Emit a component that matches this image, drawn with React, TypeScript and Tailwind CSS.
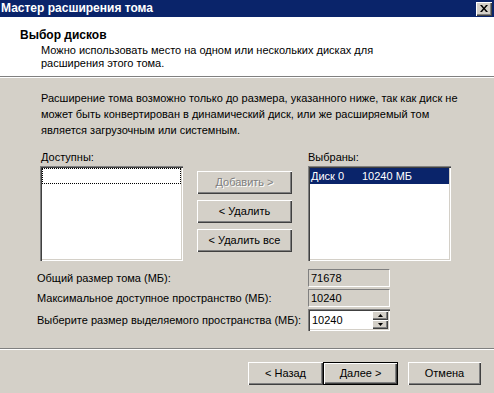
import React from 'react';

const sunken =
  'shadow-[inset_1px_1px_0_#808080,inset_2px_2px_0_#404040,inset_-1px_-1px_0_#ffffff,inset_-2px_-2px_0_#d4d0c8]';
const raised =
  'shadow-[inset_1px_1px_0_#ffffff,inset_-1px_-1px_0_#404040,inset_-2px_-2px_0_#808080]';

const Btn: React.FC<{ label: string; disabled?: boolean; isDefault?: boolean; className?: string }> = ({
  label,
  disabled,
  isDefault,
  className = '',
}) => (
  <div
    className={`${className} h-[23px] flex items-center justify-center bg-[#d4d0c8] ${
      isDefault ? 'border border-black' : ''
    }`}
  >
    <div className={`w-full h-full flex items-center justify-center ${raised}`}>
      <span
        className={
          disabled ? 'text-[#808080] [text-shadow:1px_1px_0_#ffffff]' : 'text-black'
        }
      >
        {label}
      </span>
    </div>
  </div>
);

const ReadOnly: React.FC<{ value: string }> = ({ value }) => (
  <div className="w-[82px] h-[18px] border border-t-[#808080] border-l-[#808080] border-b-white border-r-white bg-[#d4d0c8] px-[2px] flex items-center">
    {value}
  </div>
);

export default function App() {
  return (
    <div
      className="w-[494px] h-[393px] overflow-hidden bg-[#d4d0c8] flex flex-col text-[11px] leading-[13px] text-black"
      style={{ fontFamily: '"Liberation Sans", Arial, sans-serif' }}
    >
      {/* title bar */}
      <div className="h-[17px] bg-[#0a246a] flex items-center justify-between pl-[1px] pr-[2px]">
        <span className="text-white font-bold text-[12px]">Мастер расширения тома</span>
        <div className={`w-[16px] h-[14px] bg-[#d4d0c8] flex items-center justify-center ${raised}`}>
          <svg width="8" height="7" viewBox="0 0 8 7">
            <path d="M0 0h2l2 2.5L6 0h2L5 3.5 8 7H6L4 4.5 2 7H0l3-3.5z" fill="#000" />
          </svg>
        </div>
      </div>

      {/* header */}
      <div className="h-[60px] bg-white border-b border-[#808080] pl-[20px] pt-[11px]">
        <div className="font-bold text-[12px] leading-[14px]">Выбор дисков</div>
        <div className="pl-[21px] pt-[2px]">
          Можно использовать место на одном или нескольких дисках для
          <br />
          расширения этого тома.
        </div>
      </div>

      {/* body */}
      <div className="flex-1 border-t border-white pl-[40px] pt-[12px] flex flex-col">
        <p className="pl-[1px] w-[428px] leading-[16px]">
          Расширение тома возможно только до размера, указанного ниже, так как диск не может быть
          конвертирован в динамический диск, или же расширяемый том является загрузочным или
          системным.
        </p>

        <div className="flex mt-[13px]">
          <div className="flex flex-col">
            <div className="pl-[1px] h-[15px]">Доступны:</div>
            <div className={`w-[143px] h-[95px] bg-white p-[2px] ${sunken}`}>
              <div className="h-[16px] border border-dotted border-black" />
            </div>
          </div>

          <div className="flex flex-col gap-[6px] ml-[14px] mt-[20px]">
            <Btn label="Добавить >" disabled className="w-[95px]" />
            <Btn label="< Удалить" className="w-[95px]" />
            <Btn label="< Удалить все" className="w-[95px]" />
          </div>

          <div className="flex flex-col ml-[16px]">
            <div className="h-[15px]">Выбраны:</div>
            <div className={`w-[143px] h-[95px] bg-white p-[2px] ${sunken}`}>
              <div className="h-[16px] bg-[#0a246a] text-white flex items-center pl-[1px]">
                <span className="w-[51px]">Диск 0</span>
                <span>10240 МБ</span>
              </div>
            </div>
          </div>
        </div>

        <div className="flex flex-col gap-[2px] mt-[8px] -ml-[3px]">
          <div className="flex items-center h-[18px]">
            <span className="w-[271px]">Общий размер тома (МБ):</span>
            <ReadOnly value="71678" />
          </div>
          <div className="flex items-center h-[18px]">
            <span className="w-[271px]">Максимальное доступное пространство (МБ):</span>
            <ReadOnly value="10240" />
          </div>
          <div className="flex items-center h-[22px]">
            <span className="w-[271px]">Выберите размер выделяемого пространства (МБ):</span>
            <div className={`w-[82px] h-[22px] bg-white flex items-center pl-[4px] ${sunken}`}>
              <span className="flex-1">10240</span>
              <div className="flex flex-col w-[16px] h-[18px] mr-[2px]">
                <div className={`flex-1 bg-[#d4d0c8] flex items-center justify-center ${raised}`}>
                  <svg width="5" height="3" viewBox="0 0 5 3">
                    <path d="M2.5 0L5 3H0z" fill="#000" />
                  </svg>
                </div>
                <div className={`flex-1 bg-[#d4d0c8] flex items-center justify-center ${raised}`}>
                  <svg width="5" height="3" viewBox="0 0 5 3">
                    <path d="M0 0h5L2.5 3z" fill="#000" />
                  </svg>
                </div>
              </div>
            </div>
          </div>
        </div>
      </div>

      {/* footer */}
      <div className="h-[45px] border-t border-[#808080]">
        <div className="border-t border-white h-full flex items-start pt-[12px] pl-[248px]">
          <Btn label="< Назад" className="w-[75px]" />
          <Btn label="Далее >" isDefault className="w-[75px]" />
          <Btn label="Отмена" className="w-[73px] ml-[10px]" />
        </div>
      </div>
    </div>
  );
}
